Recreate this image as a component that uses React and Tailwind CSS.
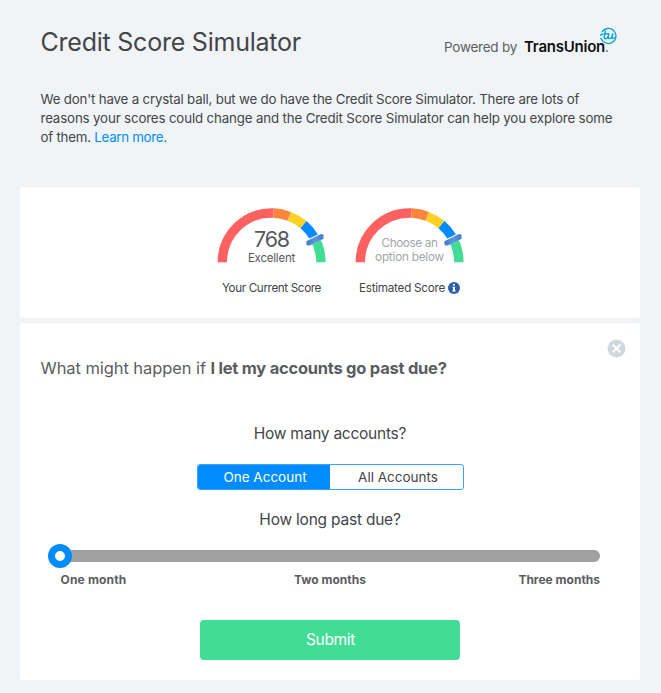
function Gauge({ children }) {
  return (
    <div className="relative h-[55px] w-[110px]">
      <svg className="absolute left-0 top-0" width="112" height="55" viewBox="0.4 0 112 55">
        <defs>
          <linearGradient id="needle" x1="0" y1="0" x2="1" y2="0">
            <stop offset="0" stopColor="#3b78c9" />
            <stop offset="0.5" stopColor="#6296da" />
            <stop offset="1" stopColor="#3f7dcc" />
          </linearGradient>
        </defs>
        <g fill="none" strokeWidth="9.4">
          <path d="M5.7 54.3 A49.3 49.3 0 0 1 57 5" stroke="#ff6161" />
          <path d="M57 5 A49.3 49.3 0 0 1 72.7 8.3" stroke="#ff853c" />
          <path d="M72.7 8.3 A49.3 49.3 0 0 1 86.9 16.7" stroke="#ffd126" />
          <path d="M86.9 16.7 A49.3 49.3 0 0 1 97.3 28.9" stroke="#008cff" />
          <path d="M97.9 29.9 A49.3 49.3 0 0 1 104.3 54.3" stroke="#41dc95" />
        </g>
        <path d="M91.2 34.6 L106 27.9" stroke="#fff" strokeWidth="6.4" />
        <path d="M89.8 33.2 L104.2 26 L106.8 26.4 L107 30.8 L93.2 37.6 L90 37.2 Z" fill="url(#needle)" />
      </svg>
      <div className="relative flex flex-col items-center">{children}</div>
    </div>
  );
}

export default function App() {
  return (
    <div className="h-[693px] w-[661px] overflow-hidden bg-[#f0f4f7] pl-5 pr-[21px] font-['Inter',sans-serif] text-[#434548]">
      <header className="flex h-[84px] items-start justify-between pl-[20.5px] pr-[21px]">
        <h1 className="pt-[26px] text-[25px] leading-8 tracking-[-0.23px]">Credit Score Simulator</h1>
        <div className="flex items-start pt-[27px]">
          <span className="pt-[10px] text-[13.5px] leading-5 tracking-[-0.25px] text-[#5a5e62]">Powered by</span>
          <div className="relative ml-[7px] h-[34px] w-[95px]">
            <span className="block pt-[10px] text-[15px] font-semibold leading-5 tracking-[-0.23px] text-[#111]">TransUnion</span>
            <span className="absolute left-[82px] top-[23px] h-[2px] w-[2px] rounded-full bg-[#777]" />
            <svg className="absolute left-[75px] top-0" width="20" height="18" viewBox="0 0 20 18" fill="none" stroke="#08a5cf" strokeLinecap="round" strokeLinejoin="round">
              <path d="M3.2 4.6 A7.6 7.6 0 1 1 3.6 13.9 M1.8 11.4 L3.6 13.9" strokeWidth="1.4" />
              <path d="M1.6 8.2 C3 6.7 5 6.8 8.8 6.7 M6.4 4.2 L5.2 10.4 C5 12.2 7 12.2 8.8 10.2 L9.9 6.8 L9.2 10.4 C9 12.2 11.4 12 12.7 10.2 L13.8 6.8 L13 10.6 C12.9 12 14.4 11.8 15.3 10.8" strokeWidth="1.4" />
            </svg>
          </div>
        </div>
      </header>

      <p className="h-[103px] whitespace-nowrap pl-[20.5px] pt-[6px] text-[13.3px] leading-[19px]">
        <span className="block tracking-[-0.19px]">We don't have a crystal ball, but we do have the Credit Score Simulator. There are lots of</span>
        <span className="block tracking-[-0.15px]">reasons your scores could change and the Credit Score Simulator can help you explore some</span>
        <span className="block tracking-[-0.22px]">
          of them. <a className="tracking-[-0.3px] text-[#008cff]">Learn more.</a>
        </span>
      </p>

      <section className="flex h-[131px] justify-center gap-[28px] rounded-[3px] bg-white pl-[21px] pt-[21px]">
        <div className="flex w-[110px] flex-col items-center">
          <Gauge>
            <span className="mt-[20px] text-[21.5px] leading-[22px] tracking-[-1.1px] text-[#55585b]">768</span>
            <span className="mt-[1px] text-[11.5px] leading-[14px] tracking-[-0.2px] text-[#55585b]">Excellent</span>
          </Gauge>
          <span className="mt-[17px] whitespace-nowrap text-[11.7px] leading-4 tracking-[-0.38px]">Your Current Score</span>
        </div>
        <div className="flex w-[110px] flex-col items-center">
          <Gauge>
            <span className="mt-[28px] text-[11.7px] leading-[14px] tracking-[-0.35px] text-[#a3a5a7]">Choose an</span>
            <span className="text-[11.7px] leading-[14px] tracking-[-0.2px] text-[#a3a5a7]">option below</span>
          </Gauge>
          <div className="mt-[17px] flex items-center gap-[3px] whitespace-nowrap text-[11.7px] leading-4">
            <span className="tracking-[-0.25px]">Estimated Score</span>
            <svg width="12" height="12" viewBox="0 0 12 12">
              <circle cx="6" cy="6" r="6" fill="#2e5fac" />
              <path d="M5 2h2v1.6H5z M4.5 4.7H7v3.7h.7v1.2H4.3V8.4H5V5.9h-.5z" fill="#fff" />
            </svg>
          </div>
        </div>
      </section>

      <section className="mt-[5px] h-[357px] rounded-[3px] bg-white">
        <div className="flex justify-end pr-[14px] pt-4">
          <svg width="19" height="19" viewBox="0 0 19 19">
            <circle cx="9.5" cy="9.5" r="9" fill="#d0d7dd" />
            <path d="M5.8 5.8l7.4 7.4M13.2 5.8l-7.4 7.4" stroke="#fff" strokeWidth="2" />
          </svg>
        </div>
        <h2 className="whitespace-nowrap pl-[20.5px] text-[16.5px] leading-5 tracking-[-0.08px] text-[#5a5d60]">
          What might happen if <b className="font-bold tracking-[-0.25px]">I let my accounts go past due?</b>
        </h2>
        <div className="mt-[46px] text-center text-[15.5px] leading-5 tracking-[-0.25px]">How many accounts?</div>
        <div className="ml-[177px] mt-[20px] flex h-[26px] w-[267px] overflow-hidden rounded-[3px] border border-[#3fa5f8] text-[13.5px] leading-6">
          <button className="-my-px -ml-px w-[133px] bg-[#008cff] pb-px pl-[3px] text-white">One Account</button>
          <button className="flex-1 pl-[3px]">All Accounts</button>
        </div>
        <div className="mt-[20px] text-center text-[15.5px] leading-5 tracking-[-0.22px]">How long past due?</div>
        <div className="ml-[28px] mt-[14px] flex h-6 items-center">
          <div className="z-10 h-6 w-6 rounded-full border-[7px] border-[#008cff] bg-white" />
          <div className="-ml-3 h-3 w-[540px] rounded-full bg-[#a1a1a1] shadow-[inset_0_1px_2px_rgba(0,0,0,0.06)]" />
        </div>
        <div className="ml-10 mt-[3px] grid w-[540px] grid-cols-3 text-[12px] font-bold leading-[18px] text-[#5a5d60]">
          <span className="pl-[0.5px] tracking-[0.18px]">One month</span>
          <span className="text-center">Two months</span>
          <span className="text-right">Three months</span>
        </div>
        <button className="mx-auto mt-[31px] block h-10 w-[260px] rounded-[4px] bg-[#41dc95] pl-px text-[15.5px] leading-5 tracking-[-0.3px] text-white">Submit</button>
      </section>
    </div>
  );
}
